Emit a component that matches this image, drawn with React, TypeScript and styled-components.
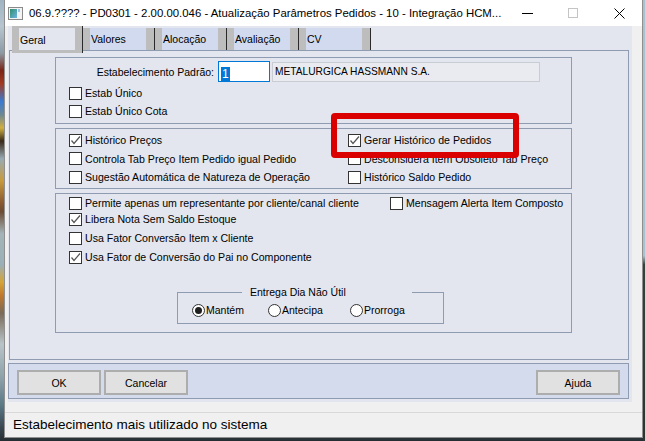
import React from 'react';
import styled, { createGlobalStyle } from 'styled-components';

const GlobalStyle = createGlobalStyle`
  html, body {
    margin: 0;
    padding: 0;
  }
  body {
    width: 645px;
    height: 441px;
    overflow: hidden;
    font-family: "Liberation Sans", Arial, sans-serif;
  }
`;

const LINE = '#8e9bb1';
const DIALOG_BG = '#e3e6ee';

// Desktop + window frame

const Screen = styled.div`
  width: 645px;
  height: 441px;
  box-sizing: border-box;
  display: flex;
  padding: 0 2px 3px 4px;
  background:
    linear-gradient(180deg, #a9c2cf 0, #a9c2cf 58%, #34423b 60%, #2c3530 100%) right top / 2px 100% no-repeat,
    linear-gradient(180deg, #9fb4c2 0%, #b7c6cf 6%, #8c9aa5 12%, #7a2416 16%, #a23a22 19%, #3a7ad0 23%, #6c8894 26%,
      #d0b040 29%, #3a2a1a 32%, #98aab4 36%, #c79a3c 41%, #8a5a32 46%, #6b4c34 48%, #a4b4b8 53%, #9ab0b8 60%,
      #d4a438 64%, #c0782c 67%, #7a6a5a 71%, #b8c4c8 78%, #8aa0a8 86%, #5a7884 92%, #394650 97%, #262e33 100%);
`;

const Window = styled.div`
  flex: 1;
  display: flex;
  flex-direction: column;
  background: #f0f0f0;
  border: 1px solid #8f8f8f;
  border-top: none;
`;

const TitleBar = styled.div`
  height: 26px;
  flex: none;
  display: flex;
  align-items: center;
  background: #ffffff;
  padding-left: 3px;
`;

const TitleText = styled.span`
  margin-left: 6px;
  font-size: 11.4px;
  color: #000;
  white-space: nowrap;
`;

const CaptionButtons = styled.div`
  margin-left: auto;
  display: flex;
  height: 26px;
`;

const CaptionButton = styled.div`
  width: 46px;
  height: 26px;
  display: flex;
  align-items: center;
  justify-content: center;
`;

// Dialog body

const Dialog = styled.div`
  background: ${DIALOG_BG};
  margin: 0 10px 0 3px;
  padding-bottom: 3px;
  display: flex;
  flex-direction: column;
`;

const TabRow = styled.div`
  height: 24px;
  display: flex;
  align-items: flex-end;
  padding-left: 4px;
  position: relative;
  z-index: 1;
`;

const Tab = styled.div<{ $active?: boolean }>`
  box-sizing: border-box;
  width: ${p => (p.$active ? 70 : 71)}px;
  height: ${p => (p.$active ? 27 : 22)}px;
  margin-right: 1px;
  margin-bottom: ${p => (p.$active ? -3 : 0)}px;
  align-self: ${p => (p.$active ? 'flex-start' : 'flex-end')};
  border-style: solid;
  border-color: #bdbdbd;
  border-width: ${p => (p.$active ? '2px 7px 3px 7px' : '0 8px 0 7px')};
  background: ${p => (p.$active ? DIALOG_BG : '#d1daee')};
  box-shadow: 1px 0 0 #2a2a2a;
  display: flex;
  align-items: ${p => (p.$active ? 'flex-start' : 'center')};
  padding-top: ${p => (p.$active ? 6 : 0)}px;
  padding-left: 1px;
  font-size: 10.5px;
  line-height: 13px;
  color: #000;
`;

const TabPage = styled.div`
  box-sizing: border-box;
  width: 620px;
  height: 310px;
  margin-left: 1px;
  border: 1px solid ${LINE};
  padding: 6px 0 0 45px;
  display: flex;
  flex-direction: column;
  gap: 4px;
`;

const Group = styled.div<{ $height: number }>`
  box-sizing: border-box;
  width: 517px;
  height: ${p => p.$height}px;
  border: 1px solid ${LINE};
  position: relative;
`;

const Group1 = styled(Group)`
  padding: 3px 0 0 13px;
`;

const Group2 = styled(Group)`
  padding: 2px 0 0 13px;
  display: grid;
  grid-template-columns: 279px 1fr;
  grid-auto-rows: 18.5px;
`;

const Group3 = styled(Group)`
  padding: 0 0 0 13px;
`;

const Group3Grid = styled.div`
  display: grid;
  grid-template-columns: 321px 1fr;
  grid-template-rows: 16px 19px 19px 20px;
`;

const InputRow = styled.div`
  display: flex;
  align-items: center;
  height: 21px;
  margin-left: -13px;
  margin-bottom: 2px;
`;

const FieldLabel = styled.span`
  width: 158px;
  text-align: right;
  font-size: 10.5px;
  color: #000;
  white-space: nowrap;
`;

const CodeInput = styled.div`
  box-sizing: border-box;
  width: 52px;
  height: 21px;
  margin-left: 4px;
  border: 1px solid #0078d7;
  background: #fff;
  padding: 2px 0 0 2px;
`;

const Selected = styled.span`
  display: inline-block;
  background: #0078d7;
  color: #fff;
  font-size: 12px;
  line-height: 15px;
  padding: 0 1px;
`;

const Description = styled.div`
  box-sizing: border-box;
  width: 268px;
  height: 20px;
  margin-left: 2px;
  border: 1px solid #c9ccd3;
  background: #e9ebf0;
  font-size: 10.2px;
  line-height: 18px;
  padding-left: 2px;
  color: #000;
  white-space: nowrap;
`;

const CheckRow = styled.label`
  display: flex;
  align-items: center;
  gap: 3px;
  height: 18px;
  font-size: 10.6px;
  color: #000;
  white-space: nowrap;
`;

const Box = styled.span<{ $round?: boolean }>`
  box-sizing: border-box;
  flex: none;
  width: 13px;
  height: 13px;
  border: 1px solid #333;
  border-radius: ${p => (p.$round ? '50%' : '0')};
  background: #fff;
  display: flex;
  align-items: center;
  justify-content: center;
`;

const Dot = styled.span`
  width: 7px;
  height: 7px;
  border-radius: 50%;
  background: #1f1f1f;
`;

const Highlight = styled.div`
  position: absolute;
  left: 275px;
  top: -16px;
  width: 188px;
  height: 45px;
  box-sizing: border-box;
  border: 6px solid #da0000;
  border-radius: 4px;
  z-index: 2;
  pointer-events: none;
`;

const RadioSet = styled.fieldset`
  box-sizing: border-box;
  width: 267px;
  margin: 18px 0 0 108px;
  padding: 0;
  border: 1px solid ${LINE};
  min-inline-size: 0;
`;

const RadioLegend = styled.legend`
  box-sizing: border-box;
  width: 170px;
  margin-left: 64px;
  padding: 0 0 0 8px;
  font-size: 10.5px;
  line-height: 13px;
  color: #000;
`;

const RadioRow = styled.div`
  display: flex;
  height: 18px;
  margin: 2px 0 4px;
  padding-left: 14px;
`;

const RadioItem = styled.label<{ $width: number }>`
  width: ${p => p.$width}px;
  display: flex;
  align-items: center;
  gap: 1px;
  font-size: 10.5px;
  color: #000;
  white-space: nowrap;
`;

const ButtonPanel = styled.div`
  box-sizing: border-box;
  width: 621px;
  height: 36px;
  margin-top: 3px;
  border: 1px solid ${LINE};
  background: #d3dbec;
  padding: 6px 8px 0;
  display: flex;
  gap: 3px;
`;

const Button = styled.button<{ $right?: boolean }>`
  box-sizing: border-box;
  width: 84px;
  height: 25px;
  margin-left: ${p => (p.$right ? 'auto' : '0')};
  border: 2px solid #adadad;
  background: #e1e1e1;
  font-family: "Liberation Sans", Arial, sans-serif;
  font-size: 10.5px;
  color: #000;
  padding: 0;
`;

const StatusBar = styled.div`
  margin-top: 10px;
  border-top: 1px solid #d9d9d9;
  padding: 4px 0 0 8px;
  font-size: 13.5px;
  line-height: 16px;
  color: #000;
  white-space: nowrap;
`;

// Small drawings

const AppIcon = () => (
  <svg width="15" height="13" viewBox="0 0 15 13">
    <defs>
      <linearGradient id="ic" x1="0" y1="0" x2="1" y2="1">
        <stop offset="0" stopColor="#2f8f6a" />
        <stop offset="1" stopColor="#6fb4e6" />
      </linearGradient>
    </defs>
    <rect x="0.5" y="0.5" width="14" height="12" fill="#f4f4f4" stroke="#8a8a8a" />
    <rect x="2" y="2" width="7" height="9" fill="url(#ic)" />
    <rect x="10" y="2" width="2" height="3" fill="#9cc6e8" />
  </svg>
);

const CheckMark = () => (
  <svg width="11" height="11" viewBox="0 0 11 11">
    <polyline points="1.5,5.5 4,8.5 10,1.5" fill="none" stroke="#555" strokeWidth="1.2" />
  </svg>
);

const Check: React.FC<{ label: string; checked?: boolean }> = ({ label, checked }) => (
  <CheckRow>
    <Box>{checked && <CheckMark />}</Box>
    <span>{label}</span>
  </CheckRow>
);

const Radio: React.FC<{ label: string; width: number; checked?: boolean }> = ({ label, width, checked }) => (
  <RadioItem $width={width}>
    <Box $round>{checked && <Dot />}</Box>
    <span>{label}</span>
  </RadioItem>
);

const tabs = ['Geral', 'Valores', 'Alocação', 'Avaliação', 'CV'];

const App: React.FC = () => {
  return (
    <Screen>
      <GlobalStyle />
      <Window>
        <TitleBar>
          <AppIcon />
          <TitleText>
            06.9.???? - PD0301 - 2.00.00.046 - Atualização Parâmetros Pedidos - 10 - Integração HCM...
          </TitleText>
          <CaptionButtons>
            <CaptionButton>
              <svg width="11" height="11" viewBox="0 0 11 11">
                <line x1="0" y1="5.5" x2="11" y2="5.5" stroke="#000" strokeWidth="1" />
              </svg>
            </CaptionButton>
            <CaptionButton>
              <svg width="10" height="10" viewBox="0 0 10 10">
                <rect x="0.5" y="0.5" width="9" height="9" fill="none" stroke="#c4c4c4" />
              </svg>
            </CaptionButton>
            <CaptionButton>
              <svg width="11" height="11" viewBox="0 0 11 11">
                <path d="M0.5 0.5 L10.5 10.5 M10.5 0.5 L0.5 10.5" stroke="#000" strokeWidth="1" />
              </svg>
            </CaptionButton>
          </CaptionButtons>
        </TitleBar>

        <Dialog>
          <TabRow>
            {tabs.map((t, i) => (
              <Tab key={t} $active={i === 0}>{t}</Tab>
            ))}
          </TabRow>

          <TabPage>
            <Group1 $height={67}>
              <InputRow>
                <FieldLabel>Estabelecimento Padrão:</FieldLabel>
                <CodeInput><Selected>1</Selected></CodeInput>
                <Description>METALURGICA HASSMANN S.A.</Description>
              </InputRow>
              <Check label="Estab Único" />
              <Check label="Estab Único Cota" />
            </Group1>

            <Group2 $height={61}>
              <Check label="Histórico Preços" checked />
              <Check label="Gerar Histórico de Pedidos" checked />
              <Check label="Controla Tab Preço Item Pedido igual Pedido" />
              <Check label="Desconsidera Item Obsoleto Tab Preço" />
              <Check label="Sugestão Automática de Natureza de Operação" />
              <Check label="Histórico Saldo Pedido" />
              <Highlight />
            </Group2>

            <Group3 $height={140}>
              <Group3Grid>
                <Check label="Permite apenas um representante por cliente/canal cliente" />
                <Check label="Mensagem Alerta Item Composto" />
                <Check label="Libera Nota Sem Saldo Estoque" checked />
                <span />
                <Check label="Usa Fator Conversão Item x Cliente" />
                <span />
                <Check label="Usa Fator de Conversão do Pai no Componente" checked />
              </Group3Grid>
              <RadioSet>
                <RadioLegend>Entrega Dia Não Útil</RadioLegend>
                <RadioRow>
                  <Radio label="Mantém" width={76} checked />
                  <Radio label="Antecipa" width={82} />
                  <Radio label="Prorroga" width={80} />
                </RadioRow>
              </RadioSet>
            </Group3>
          </TabPage>

          <ButtonPanel>
            <Button>OK</Button>
            <Button>Cancelar</Button>
            <Button $right>Ajuda</Button>
          </ButtonPanel>
        </Dialog>

        <StatusBar>Estabelecimento mais utilizado no sistema</StatusBar>
      </Window>
    </Screen>
  );
};

export default App;
